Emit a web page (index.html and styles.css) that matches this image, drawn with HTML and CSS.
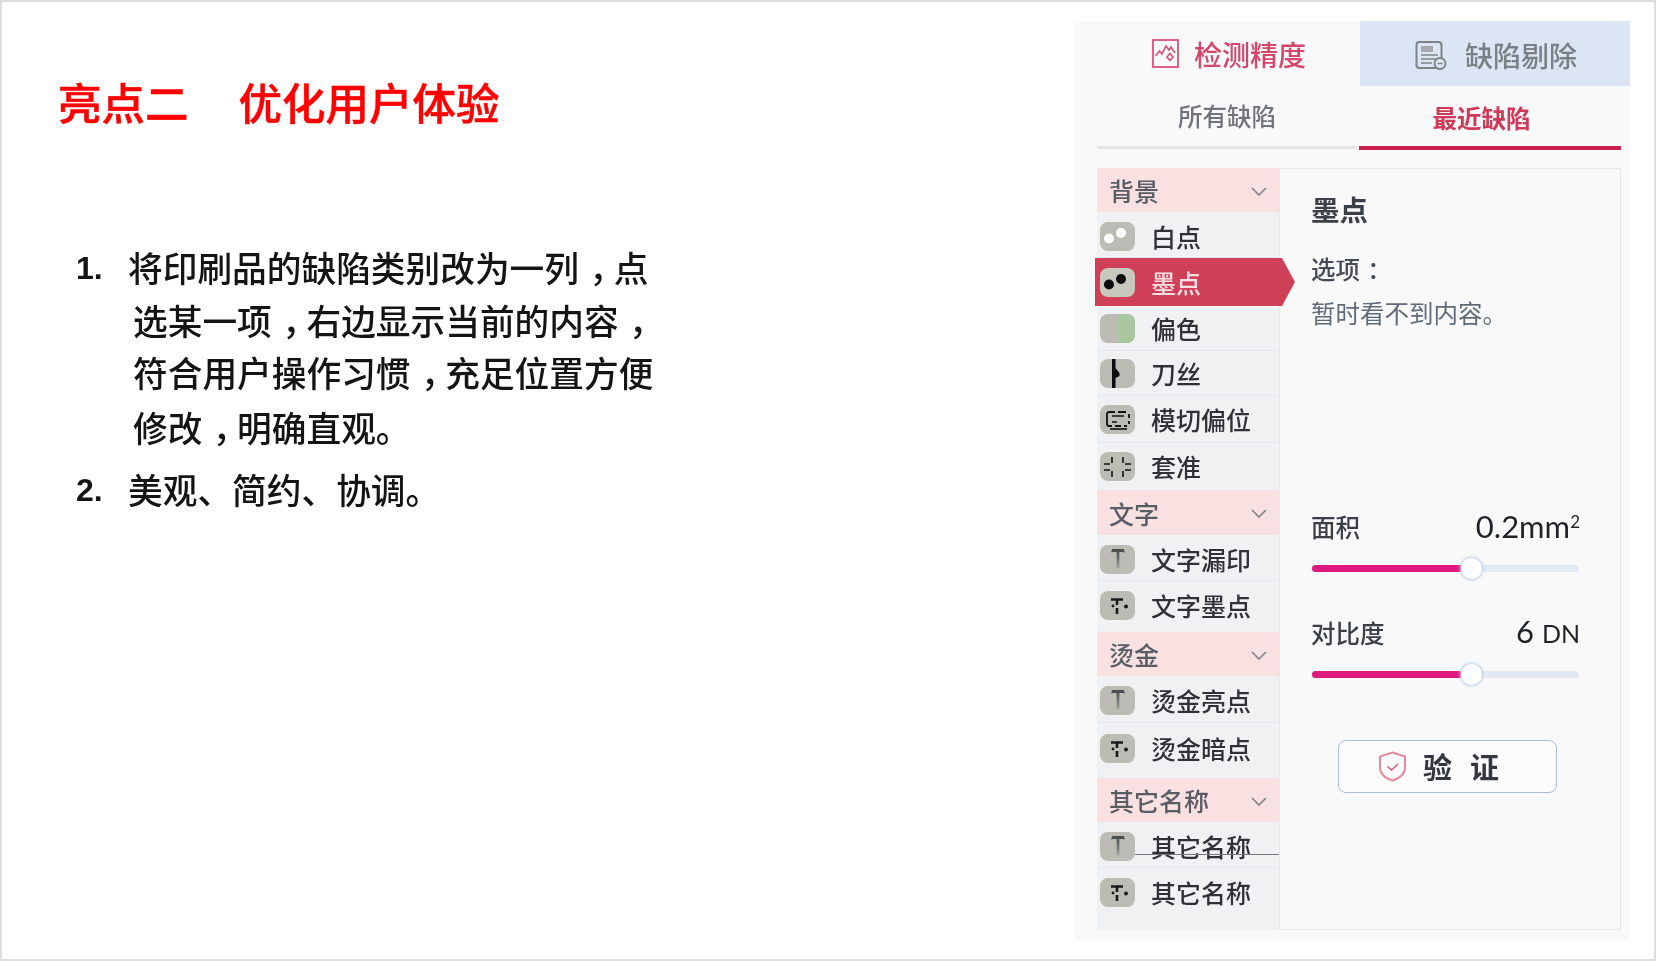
FILE: index.html
```html
<!DOCTYPE html>
<html lang="zh-CN">
<head>
<meta charset="utf-8">
<title>亮点二 优化用户体验</title>
<link rel="stylesheet" href="styles.css">
</head>
<body>
<svg class="defs" width="0" height="0" aria-hidden="true">
  <defs>
    <linearGradient id="fade" x1="0" y1="0" x2="0" y2="1">
      <stop offset="0" stop-color="#4a4d50"/>
      <stop offset="1" stop-color="#a3a39e"/>
    </linearGradient>
    <symbol id="ic-t" viewBox="0 0 35 29">
      <rect width="35" height="29" rx="8" fill="#bcbcb4"/>
      <path d="M12 5.500h12M18 5.500v18" fill="none" stroke="url(#fade)" stroke-width="2.800"/>
      <path d="M12 5.500v2M24 5.500v2" stroke="#555" stroke-width="1.200"/>
    </symbol>
    <symbol id="ic-td" viewBox="0 0 35 29">
      <rect width="35" height="29" rx="8" fill="#bcbcb4"/>
      <path d="M11 8.500h12M17 8.500v5.500M17 17v6" fill="none" stroke="#1a1a1a" stroke-width="2.600"/>
      <circle cx="26" cy="15.500" r="2" fill="#1a1a1a"/>
      <circle cx="13" cy="15" r="1.400" fill="#1a1a1a"/>
    </symbol>
    <symbol id="chev" viewBox="0 0 16 9">
      <path d="M1 1l7 7 7-7" fill="none" stroke="#7d8288" stroke-width="1.600"/>
    </symbol>
  </defs>
</svg>
<main class="slide">
  <section class="intro">
    <h1 class="headline"><span>亮点二</span><span>优化用户体验</span></h1>
    <ol class="points">
      <li class="point">
        <span class="num">1.</span>
        <div class="point-text">
          <span class="line first">将印刷品的缺陷类别改为一列<span class="cm">，</span>点</span>
          <span class="line">选某一项<span class="cm">，</span>右边显示当前的内容<span class="cm">，</span></span>
          <span class="line">符合用户操作习惯<span class="cm">，</span>充足位置方便</span>
          <span class="line last">修改<span class="cm">，</span>明确直观。</span>
        </div>
      </li>
      <li class="point">
        <span class="num">2.</span>
        <div class="point-text">
          <span class="line first">美观、简约、协调。</span>
        </div>
      </li>
    </ol>
  </section>

  <section class="panel">
    <div class="main-tabs">
      <div class="main-tab on">
        <svg class="tab-ic" viewBox="0 0 27 29" width="27" height="29">
          <rect x="1" y="1" width="25" height="27" fill="none" stroke="#d6517a" stroke-width="1.800"/>
          <path d="M3.500 17l4-5 2.500 3 4-8 3 4 2-3 4 6" fill="none" stroke="#d6517a" stroke-width="1.600"/>
          <path d="M18 14.500l3 3.500-3 3.500-3-3.500z" fill="none" stroke="#d6517a" stroke-width="1.600"/>
        </svg>
        <span>检测精度</span>
      </div>
      <div class="main-tab off">
        <svg class="tab-ic" viewBox="0 0 32 29" width="32" height="29">
          <rect x="1.500" y="1" width="25" height="26" rx="3" fill="none" stroke="#7d8287" stroke-width="2"/>
          <rect x="6" y="5" width="12" height="6" fill="#a4a8ac"/>
          <path d="M6 14h17M6 18h17M6 22h11" stroke="#7d8287" stroke-width="1.600"/>
          <circle cx="25" cy="22.500" r="5.500" fill="#dbe5f3" stroke="#7d8287" stroke-width="1.800"/>
          <path d="M22.500 22.500h5" stroke="#7d8287" stroke-width="1.400"/>
        </svg>
        <span>缺陷剔除</span>
      </div>
    </div>

    <div class="sub-tabs">
      <div class="sub-tab">所有缺陷</div>
      <div class="sub-tab on">最近缺陷</div>
    </div>

    <div class="work">
      <div class="side">
        <div class="group"><span>背景</span><svg class="chev"><use href="#chev"/></svg></div>
        <div class="row nudge">
          <svg class="chip" viewBox="0 0 35 29"><rect width="35" height="29" rx="8" fill="#bcbcb4"/><circle cx="9" cy="16.500" r="5" fill="#fff"/><circle cx="21" cy="11" r="5" fill="#fff"/></svg>
          <span>白点</span>
        </div>
        <div class="row active">
          <svg class="chip" viewBox="0 0 35 29"><rect width="35" height="29" rx="8" fill="#c8c8bf"/><circle cx="9" cy="16.500" r="5" fill="#0d0d0d"/><circle cx="21" cy="11" r="5" fill="#0d0d0d"/></svg>
          <span>墨点</span>
        </div>
        <div class="row h45">
          <svg class="chip" viewBox="0 0 35 29"><rect width="35" height="29" rx="8" fill="#bcbcb4"/><path d="M18 0h9a8 8 0 0 1 8 8v13a8 8 0 0 1-8 8h-9z" fill="#a8c69f"/></svg>
          <span>偏色</span>
        </div>
        <div class="row h45">
          <svg class="chip" viewBox="0 0 35 29"><rect width="35" height="29" rx="8" fill="#bcbcb4"/><path d="M12 0h3.500v9l4 5v3l-4 2v10h-3.500z" fill="#0d0d0d"/></svg>
          <span>刀丝</span>
        </div>
        <div class="row h47">
          <svg class="chip" viewBox="0 0 35 29"><rect width="35" height="29" rx="8" fill="#bcbcb4"/><path d="M15 7H9a2 2 0 0 0-2 2v10a2 2 0 0 0 2 2h3M15 21h6M24 21h3M29 16v3M29 9v4M18 7h8" fill="none" stroke="#111" stroke-width="1.800"/><path d="M12 11h12M12 17h5" stroke="#111" stroke-width="1.400"/><path d="M10 24h17" stroke="#111" stroke-width="1.600"/></svg>
          <span>模切偏位</span>
        </div>
        <div class="row h47 plain">
          <svg class="chip" viewBox="0 0 35 29"><rect width="35" height="29" rx="8" fill="#bcbcb4"/><path d="M12 5v6M23 5v6M12 19v6M23 19v6M4 12h6M25 12h6M4 18h6M25 18h6" stroke="#111" stroke-width="1.600"/></svg>
          <span>套准</span>
        </div>

        <div class="group h45"><span>文字</span><svg class="chev"><use href="#chev"/></svg></div>
        <div class="row nudge"><svg class="chip"><use href="#ic-t"/></svg><span>文字漏印</span></div>
        <div class="row h51 plain tail3"><svg class="chip"><use href="#ic-td"/></svg><span>文字墨点</span></div>

        <div class="group"><span>烫金</span><svg class="chev"><use href="#chev"/></svg></div>
        <div class="row h47 nudge"><svg class="chip"><use href="#ic-t"/></svg><span>烫金亮点</span></div>
        <div class="row h55 plain tail5"><svg class="chip"><use href="#ic-td"/></svg><span>烫金暗点</span></div>

        <div class="group"><span>其它名称</span><svg class="chev"><use href="#chev"/></svg></div>
        <div class="row nudge"><svg class="chip"><use href="#ic-t"/></svg><span>其它名称</span></div>
        <div class="row h62 plain tail14"><svg class="chip"><use href="#ic-td"/></svg><span>其它名称</span></div>
        <i class="stray-line"></i>
      </div>

      <div class="detail">
        <h2 class="detail-title">墨点</h2>
        <p class="opt">选项<span class="cm">：</span></p>
        <p class="note">暂时看不到内容。</p>

        <div class="metric first-metric">
          <span class="m-label">面积</span>
          <span class="m-value">0.2mm<sup>2</sup></span>
        </div>
        <div class="slider"><b class="fill"></b><i class="thumb"></i></div>

        <div class="metric second-metric">
          <span class="m-label">对比度</span>
          <span class="m-value">6 <small>DN</small></span>
        </div>
        <div class="slider"><b class="fill"></b><i class="thumb"></i></div>

        <button class="verify" type="button">
          <svg viewBox="0 0 29 31" width="29" height="31">
            <path d="M14.500 1.500L27 5.500v11c0 6-5 10.500-12.500 13C7 27 2 22.500 2 16.500v-11z" fill="none" stroke="#e58a9c" stroke-width="2"/>
            <path d="M9.500 15.500l4 3.500 6.500-6" fill="none" stroke="#d95a78" stroke-width="1.600"/>
          </svg>
          <span>验</span><span class="second">证</span>
        </button>
      </div>
    </div>
  </section>
</main>
</body>
</html>
```

FILE: styles.css
```css
* { box-sizing: border-box; }
html, body { margin: 0; padding: 0; background: #fff; }
body { font-family: "Liberation Sans", "Noto Sans CJK SC", sans-serif; }
.defs { position: absolute; }

.slide {
  width: 1656px;
  height: 961px;
  border: 2px solid #dcdfdf;
  background: #fff;
  display: flex;
  justify-content: space-between;
  overflow: hidden;
}

/* left copy */
.intro { padding: 78px 0 0 56px; filter: blur(.4px); }
.headline {
  margin: 0;
  display: flex;
  gap: 50px;
  font-family: "Noto Sans CJK SC", sans-serif;
  font-size: 43.500px;
  line-height: 44px;
  font-weight: 500;
  color: #fe0000;
  -webkit-text-stroke: .5px #fe0000;
}
.points { list-style: none; margin: 117px 0 0; padding: 0 0 0 18px; color: #141414; }
.point { display: flex; margin-bottom: 9.700px; }
.num {
  width: 57px;
  padding-top: 1px;
  font: bold 32px/52.500px "Liberation Sans", sans-serif;
}
.point-text {
  font-family: "Noto Sans CJK SC", sans-serif;
  font-size: 34.700px;
  line-height: 52.500px;
  font-weight: 500;
  white-space: nowrap;
}
.line { display: block; }
.line.first { margin-left: -5px; }
.line.last { margin-top: 2.500px; }
.cm { font-feature-settings: "halt"; padding: 0 .2em 0 .3em; }

/* right panel */
.panel {
  width: 556px;
  height: 919px;
  margin: 19px 24px 0 0;
  background: #f9f9fa;
  filter: blur(.45px);
  font-family: "Noto Sans CJK SC", sans-serif;
}
.main-tabs { display: flex; height: 65px; }
.main-tab {
  display: flex;
  align-items: center;
  font-size: 28px;
  line-height: 1;
  font-weight: 500;
}
.main-tab.on { width: 286px; padding-left: 78px; gap: 15px; color: #d4466a; }
.main-tab.off { width: 270px; padding: 3px 0 0 55px; gap: 18px; background: #dbe5f3; color: #7a7f85; }
.tab-ic { flex: none; }

.sub-tabs { display: flex; margin: 0 9px 0 23px; height: 65px; }
.sub-tab {
  width: 260px;
  height: 63px;
  text-align: center;
  line-height: 60px;
  font-size: 24.500px;
  font-weight: 500;
  color: #71757b;
  border-bottom: 3px solid #e4e6e9;
}
.sub-tab.on {
  flex: 1;
  margin-left: 2px;
  padding-right: 17px;
  height: 64px;
  line-height: 64px;
  font-weight: 700;
  color: #cf3a59;
  border-bottom: 4px solid #c9214a;
}

.work {
  display: flex;
  margin: 17px 9px 0 23px;
  height: 762px;
  border-top: 1px solid #e6e8ec;
  border-right: 1px solid #e3e6ea;
  border-bottom: 1px solid #e6e8ec;
}
.side {
  width: 182px;
  flex: none;
  position: relative;
  background: #f0f1f3;
  margin-top: -1px;
  margin-bottom: -1px;
  font-size: 25px;
  font-weight: 500;
  color: #2e3238;
}
.group {
  height: 44px;
  display: flex;
  align-items: center;
  justify-content: space-between;
  padding: 0 12px;
  background: #f9e1e2;
  color: #585c65;
}
.group.h45 { height: 45px; }
.chev { width: 16px; height: 9px; margin-top: 2px; }

.row {
  height: 46px;
  display: flex;
  align-items: center;
  gap: 16px;
  padding-left: 3px;
  border-bottom: 1px solid #e3e8f0;
}
.row span { line-height: 1; }
.row.h45 { height: 45px; }
.row.h47 { height: 47px; }
.row.h51 { height: 51px; }
.row.h55 { height: 55px; }
.row.h62 { height: 62px; }
.row.plain { border-bottom: 0; }
.row.nudge { padding-top: 3px; }
.row.tail3 { padding-bottom: 3px; }
.row.tail5 { padding-bottom: 5px; }
.row.tail14 { padding-bottom: 14px; }
.chip { width: 35px; height: 29px; flex: none; }
.row.active {
  position: relative;
  z-index: 1;
  width: 200px;
  height: 48px;
  margin-left: -2px;
  padding-left: 5px;
  border-bottom: 0;
  background: #cf4058;
  color: #f8dfe3;
  clip-path: polygon(0 0, 187px 0, 100% 50%, 187px 100%, 0 100%);
}
.stray-line {
  position: absolute;
  left: 38px;
  right: 0;
  top: 686px;
  height: 1px;
  background: #777a7c;
}

.detail {
  flex: 1;
  border-left: 1px solid #e6e8ec;
  padding: 0 40px 0 31px;
  color: #33383f;
}
.detail-title {
  margin: 23px 0 0;
  font-size: 28.500px;
  line-height: 34px;
  font-weight: 700;
  color: #3a3f48;
}
.opt { margin: 26px 0 0; font-size: 24.500px; line-height: 34px; font-weight: 500; color: #454b55; }
.note { margin: 10px 0 0; font-size: 24.500px; line-height: 34px; color: #5f6b78; }

.metric { display: flex; justify-content: space-between; align-items: center; height: 36px; }
.first-metric { margin-top: 178px; }
.second-metric { margin-top: 42px; }
.m-label { font-size: 24.500px; font-weight: 500; color: #3b4048; }
.m-value { font: 400 31px/36px Lato, sans-serif; color: #1f2226; white-space: nowrap; }
.m-value sup { font-size: 17px; line-height: 0; vertical-align: 10px; }
.m-value small { font-size: 25px; }

.slider {
  position: relative;
  height: 7px;
  margin: 21px 1px 0 1px;
  border-radius: 4px;
  background: #e1e9f3;
}
.fill { display: block; width: 150px; height: 7px; border-radius: 4px; background: #dd1a80; }
.thumb {
  position: absolute;
  left: 149px;
  top: -7px;
  width: 21px;
  height: 21px;
  border-radius: 50%;
  background: #fff;
  box-shadow: 0 0 3px 1px #bccbe3;
}

.verify {
  display: flex;
  align-items: center;
  width: 219px;
  height: 53px;
  margin: 62px 0 0 27px;
  padding: 0 0 0 39px;
  border: 1.500px solid #aebfd9;
  border-radius: 8px;
  background: #fbfbfc;
  font-family: "Noto Sans CJK SC", sans-serif;
  font-size: 29px;
  font-weight: 700;
  color: #33383f;
}
.verify span { margin-left: 16px; line-height: 1; }
.verify .second { margin-left: 18px; }
```
